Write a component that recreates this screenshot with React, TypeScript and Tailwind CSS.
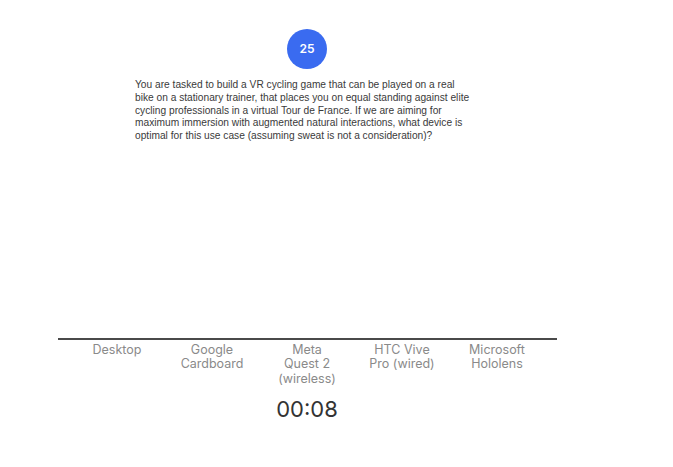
import React from 'react';

const options = ['Desktop', 'Google Cardboard', 'Meta Quest 2 (wireless)', 'HTC Vive Pro (wired)', 'Microsoft Hololens'];

export default function App() {
  return (
    <div className="w-[673px] h-[467px] bg-white font-['Inter',sans-serif]">
      <div className="w-[614px] flex flex-col items-center">
        <div className="mt-[29px] w-10 h-10 rounded-full bg-[#3a6bf0] flex items-center justify-center text-white text-[12px] font-semibold">
          25
        </div>
        <p className="mt-[10px] w-[338px] ml-[-6px] text-[10.2px] leading-[12.8px] text-[#3a3a3a] font-['Liberation_Sans',Arial,sans-serif]">
          You are tasked to build a VR cycling game that can be played on a real bike on a stationary trainer, that places you on equal standing against elite cycling professionals in a virtual Tour de France. If we are aiming for maximum immersion with augmented natural interactions, what device is optimal for this use case (assuming sweat is not a consideration)?
        </p>
        <div className="mt-[195px] w-[499px] h-[2px] bg-[#4a4a4a]" />
        <div className="mt-[3px] w-[475px] grid grid-cols-5">
          {options.map((o) => (
            <div key={o} className="px-[14px] text-center text-[12.5px] leading-[14.5px] text-[#8a8a8a]">
              {o}
            </div>
          ))}
        </div>
        <div className="mt-[10px] text-[22px] leading-[26px] text-[#333]">00:08</div>
      </div>
    </div>
  );
}
